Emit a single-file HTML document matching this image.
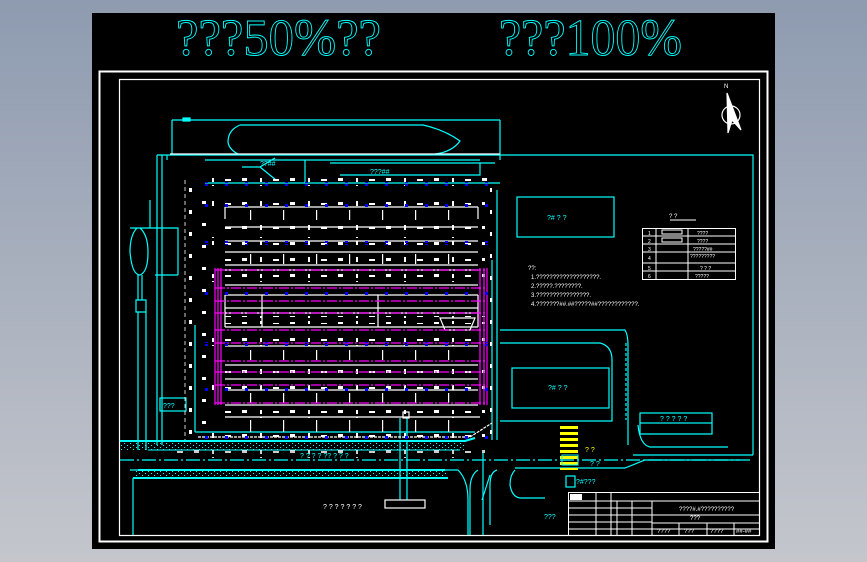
<!DOCTYPE html>
<html><head><meta charset="utf-8"><style>
html,body{margin:0;padding:0;width:867px;height:562px;overflow:hidden;background:linear-gradient(#8e9bb0,#c4c6cc);}
svg{position:absolute;left:0;top:0}
</style></head><body>
<svg width="867" height="562" viewBox="0 0 867 562" xmlns="http://www.w3.org/2000/svg" font-family="Liberation Sans, sans-serif">
<defs>
<pattern id="bd" x="5" y="0" width="20" height="4" patternUnits="userSpaceOnUse"><rect x="0" y="0" width="3" height="3" fill="#0000ff"/></pattern>
<pattern id="wm" x="0" y="0" width="48" height="8" patternUnits="userSpaceOnUse"><rect x="2" y="2" width="5" height="3" fill="#fff"/><rect x="20" y="1" width="2" height="5" fill="#fff"/><rect x="33" y="3" width="6" height="2" fill="#fff"/></pattern>
<pattern id="wc" x="0" y="0" width="25" height="22" patternUnits="userSpaceOnUse"><rect x="2" y="3" width="4" height="3" fill="#fff"/><rect x="14" y="12" width="3" height="4" fill="#fff"/></pattern>
<pattern id="vt" x="250" y="0" width="33" height="12" patternUnits="userSpaceOnUse"><rect x="0" y="0" width="1.2" height="12" fill="#fff"/></pattern>
<pattern id="dt" x="0" y="0" width="6" height="4" patternUnits="userSpaceOnUse"><rect x="1" y="1" width="1" height="1" fill="#0ff"/><rect x="4" y="3" width="1" height="1" fill="#0ff"/></pattern>
<pattern id="yl" x="0" y="0" width="18" height="6" patternUnits="userSpaceOnUse"><rect x="0" y="0" width="18" height="3" fill="#ff0"/></pattern>
</defs>
<rect x="92" y="13" width="683" height="536" fill="#000"/>
<g font-family="Liberation Serif, serif" font-size="52" fill="none" stroke="#0ff" stroke-width="0.9">
<text x="176" y="55" textLength="205" lengthAdjust="spacingAndGlyphs">???50%??</text>
<text x="499" y="55" textLength="183" lengthAdjust="spacingAndGlyphs">???100%</text>
</g>
<rect x="99.5" y="71.5" width="668" height="470" fill="none" stroke="#fff" stroke-width="2"/>
<rect x="119.5" y="79.5" width="640" height="456" fill="none" stroke="#fff" stroke-width="1.2"/>
<g stroke="#fff" fill="none" stroke-width="1.2"><circle cx="731" cy="115" r="9"/><path d="M727 93 L741 130 L732 120 L728 133 Z" fill="#fff"/></g>
<text x="724" y="88" font-size="6" fill="#fff">N</text>
<g stroke="#0ff" fill="none" stroke-width="1.2">
<path d="M172 120 H500 M172 120 V155 M500 120 V160"/>
<rect x="183" y="118" width="7" height="3" fill="#0ff"/>
<path d="M240 125 H423 Q445 130 460 141 Q452 152 435 154 M240 125 Q228 130 228 142 Q229 150 240 155"/>
<path d="M157 155 H753 V455 M157 155 V445 M162 155 V445 M167 155 V160"/>
<path d="M205 160 H480 M205 183 H500 M305 160 V183 M330 163 H495 M340 175 H480 V163 M242 167 H260 L275 158 M260 167 L276 180"/>
<rect x="517" y="197" width="97" height="40"/>
<path d="M130 228 H150 M137 228 Q130 235 130 252 Q132 275 140 275 Q148 272 148 252 Q148 235 140 228 M138 275 V300 M142 275 V300 M136 300 H146 V312 H136Z M138 312 V450 M146 312 V450"/>
<path d="M150 228 V200 M150 228 H178 V275 M178 275 H155"/>
<rect x="160" y="398" width="26" height="13"/>
<path d="M195 325 V432 M195 432 H475"/>
<path d="M492 260 V440 M497 190 V440 M500 330 H625 Q628 335 628 345 V445 M500 343 H600 Q612 346 612 360 V421 H500"/>
<rect x="512" y="368" width="97" height="40"/>
<path d="M626 343 V420" stroke-dasharray="3 2"/>
<rect x="640" y="413" width="72" height="10"/>
<path d="M640 423 V434 H712 V423"/>
<path d="M638 425 Q640 445 650 447 H728"/>
<path d="M633 455 H753"/>
<path d="M120 460 H750" stroke-dasharray="14 3 2 3"/>
<path d="M130 470 H458 Q468 480 468 500 V535 M133 478 V535"/>
<path d="M478 470 Q470 475 470 490 V535 M490 475 L482 500 M497 470 Q490 472 490 485 V525 M515 468 H625 L645 460 H740 M515 470 Q510 475 510 485 Q512 497 520 498 H545"/>
<rect x="566" y="476" width="9" height="11"/>
<path d="M400 418 V500 M407 418 V500"/>
<path d="M483 453 V535"/>
</g>
<rect x="120" y="441" width="40" height="9" fill="url(#dt)"/><rect x="145" y="441" width="320" height="9" fill="url(#dt)"/>
<path d="M120 441 H160 M148 441 H465 L475 438" stroke="#0ff" stroke-width="2"/>
<path d="M148 450 H460" stroke="#0ff" stroke-width="1"/>
<rect x="135" y="470" width="312" height="8" fill="url(#dt)"/>
<path d="M138 470 H445 M133 478 H448" stroke="#0ff" stroke-width="2"/>
<g stroke="#fff" fill="none" stroke-width="1.2">
<path d="M170 154 H500"/>
<path d="M225 207 H478 M225 227 H478 M225 241 H478 M225 252 H478 M225 265 H478 M225 270 H478 M225 285 H478 M225 295 H478 M225 308 H478 M225 313 H478 M225 327 H478 M225 346 H478 M225 365 H478 M225 379 H478 M225 390 H478 M225 405 H478 M225 417 H480"/>
<path d="M225 207 V219 M478 207 V219 M225 295 V327 M262 295 V327 M378 295 V327 M478 295 V327"/>
<path d="M198 437 H470 L492 423" stroke-dasharray="3 1"/>
<path d="M185 180 V440" stroke-width="0.8" stroke-dasharray="4 3"/>
<path d="M440 318 H475 L470 330 H445 Z"/>
<rect x="403" y="412" width="6" height="6"/><rect x="385" y="500" width="40" height="8"/>
</g>
<g>
<rect x="200" y="178" width="300" height="8" fill="url(#wm)"/>
<rect x="205" y="200" width="280" height="8" fill="url(#wm)"/>
<rect x="215" y="222" width="270" height="8" fill="url(#wm)"/>
<rect x="205" y="237" width="280" height="8" fill="url(#wm)"/>
<rect x="215" y="257" width="270" height="8" fill="url(#wm)"/>
<rect x="205" y="274" width="280" height="8" fill="url(#wm)"/>
<rect x="215" y="316" width="270" height="8" fill="url(#wm)"/>
<rect x="205" y="338" width="280" height="8" fill="url(#wm)"/>
<rect x="215" y="368" width="270" height="8" fill="url(#wm)"/>
<rect x="205" y="383" width="280" height="8" fill="url(#wm)"/>
<rect x="215" y="410" width="270" height="8" fill="url(#wm)"/>
<rect x="205" y="430" width="280" height="8" fill="url(#wm)"/>
<rect x="175" y="450" width="310" height="8" fill="url(#wm)" opacity="0.8"/>
<rect x="188" y="185" width="25" height="250" fill="url(#wc)"/>
<rect x="490" y="185" width="12" height="250" fill="url(#wc)"/>
<rect x="225" y="210" width="255" height="10" fill="url(#vt)"/>
<rect x="225" y="254" width="255" height="10" fill="url(#vt)"/>
<rect x="225" y="350" width="255" height="10" fill="url(#vt)"/>
<rect x="225" y="393" width="255" height="10" fill="url(#vt)"/>
<rect x="225" y="420" width="255" height="12" fill="url(#vt)"/>
</g>
<g stroke="#f0f" fill="none" stroke-width="1.2">
<path d="M215 270 H485 M215 288 H485 M215 301 H485 M215 313 H485 M215 330 H485 M215 343 H485 M215 361 H485 M215 372 H485 M215 385 H485 M215 403 H485" stroke-dasharray="10 2 2 2"/>
<path d="M215 268 V405 M218 268 V405 M221 268 V405 M480 268 V405 M484 268 V405 M487 268 V405"/>
</g>
<g>
<rect x="205" y="182" width="290" height="4" fill="url(#bd)"/>
<rect x="205" y="203" width="290" height="4" fill="url(#bd)"/>
<rect x="205" y="241" width="290" height="4" fill="url(#bd)"/>
<rect x="205" y="291" width="290" height="4" fill="url(#bd)"/>
<rect x="205" y="342" width="290" height="4" fill="url(#bd)"/>
<rect x="205" y="387" width="290" height="4" fill="url(#bd)"/>
<rect x="205" y="435" width="290" height="4" fill="url(#bd)"/>
</g>
<rect x="560" y="425" width="18" height="45" fill="url(#yl)"/>
<rect x="562" y="455" width="16" height="10" fill="none" stroke="#0ff"/>
<text x="585" y="452" font-size="7" fill="#ff0">? ?</text>
<text x="590" y="466" font-size="7" fill="#0ff">? ?</text>
<g font-size="7" fill="#0ff">
<text x="547" y="220">?# ? ?</text>
<text x="548" y="390">?# ? ?</text>
<text x="660" y="421">? ? ? ? ?</text>
<text x="576" y="484">?#???</text>
<text x="544" y="519">???</text>
<text x="163" y="408">???</text>
<text x="260" y="166">??##</text>
<text x="370" y="174">???##</text>
<text x="300" y="458">? ? ? ? ?? ? ? ?</text>
</g>
<g font-size="6" fill="#fff">
<text x="528" y="270">??:</text>
<text x="531" y="279">1.???????????????????.</text>
<text x="531" y="288">2.?????.????????.</text>
<text x="531" y="297">3.????????????????.</text>
<text x="531" y="306">4.???????##.##?????##????????????.</text>
<text x="323" y="509" font-size="7">? ? ? ? ? ? ?</text>
<text x="669" y="218">?  ?</text>
</g>
<path d="M670 220 H696" stroke="#fff"/>
<g stroke="#fff" fill="none" stroke-width="1">
<rect x="642.5" y="228.5" width="93" height="51"/>
<path d="M642 236 H736 M642 244 H736 M642 252 H736 M642 263 H736 M642 271 H736 M656 228 V280 M688 228 V280"/>
<rect x="662" y="230" width="20" height="4"/><rect x="662" y="238" width="20" height="4"/>
</g>
<g font-size="5" fill="#fff"><text x="648" y="235">1</text><text x="648" y="243">2</text><text x="648" y="251">3</text><text x="648" y="260">4</text><text x="648" y="270">5</text><text x="648" y="278">6</text>
<text x="697" y="235">????</text><text x="697" y="243">????</text><text x="693" y="251">?????##</text><text x="690" y="258">?????????</text><text x="700" y="270">? ? ?</text><text x="695" y="278">?????</text></g>
<g stroke="#fff" fill="none" stroke-width="1">
<rect x="568.5" y="492.5" width="191" height="43"/>
<path d="M568 501 H760 M568 508 H652 M568 515 H652 M568 522 H652 M568 529 H760 M652 515 H760 M652 523 H760 M596 492 V535 M611 492 V535 M617 501 V535 M632 501 V535 M652 501 V535 M679 523 V535 M707 523 V535 M734 523 V535"/>
</g>
<rect x="570" y="494" width="12" height="6" fill="#fff"/>
<g font-size="6" fill="#fff"><text x="679" y="511">????#.#??????????</text><text x="690" y="520">???</text><text x="657" y="533">????</text><text x="684" y="533">???</text><text x="710" y="533">????</text><text x="736" y="533">##-##</text></g>
</svg>
</body></html>
